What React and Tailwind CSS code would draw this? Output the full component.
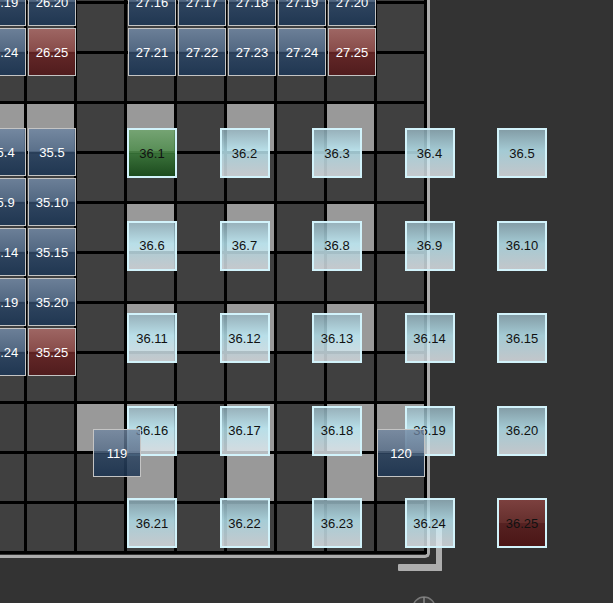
import React from "react";

// grid cells drawn as light "slot" squares (row-col)
const SLOTS = new Set([
  "3-0", "3-1", "3-3", "3-5", "3-7",
  "5-3", "5-5", "5-7",
  "7-3", "7-5", "7-7",
  "9-2", "9-3", "9-5", "9-7", "9-8",
  "10-3", "10-5", "10-7",
]);

const tones = {
  blue: "border border-[#c4c4c4] text-white bg-[linear-gradient(to_bottom,#7086a1e6_0%,#536b88e6_50%,#2e4663e6_50%,#1d3654e6_100%)]",
  red: "border border-[#c4c4c4] text-white bg-[linear-gradient(to_bottom,#a86a67e6_0%,#8f4c49e6_50%,#682525e6_50%,#52181ae6_100%)]",
  light: "border-2 border-[#d2f3fb] text-[#111] bg-[linear-gradient(to_bottom,#98b8c4cc_0%,#c0f0fccc_45%,#e6ebf0cc_100%)]",
  green: "border-2 border-[#d2f3fb] text-[#111] bg-[linear-gradient(to_bottom,#70a56ee0_0%,#4c8a4ae0_50%,#3a7a3ae0_50%,#184d1ae0_100%)]",
  wine: "border-2 border-[#d2f3fb] text-[#111] bg-[linear-gradient(to_bottom,#844240e6_0%,#6a2e2ce6_50%,#5a2020e6_50%,#4d1212e6_100%)]",
  ghost: "border border-[#c4c4c4] text-white bg-[linear-gradient(to_bottom,#7086a1cc_0%,#536b88cc_50%,#2e4663d9_50%,#1d3654d9_100%)]",
};

const block26 = ["26.19", "26.20", "26.24", "26.25"];
const block27 = [16, 17, 18, 19, 20, 21, 22, 23, 24, 25].map((n) => `27.${n}`);
const block35 = [4, 5, 9, 10, 14, 15, 19, 20, 24, 25].map((n) => `35.${n}`);
const block36 = Array.from({ length: 25 }, (_, i) => `36.${i + 1}`);

const redOnes = ["26.25", "27.25", "35.25"];

function Tile({ label, tone, className = "" }) {
  return (
    <div
      className={`flex items-center justify-center text-[13px] leading-none font-['Liberation_Sans',Arial,sans-serif] ${tones[tone]} ${className}`}
    >
      {label}
    </div>
  );
}

export default function App() {
  const cells = [];
  for (let r = 0; r < 12; r++) {
    for (let c = 0; c < 9; c++) {
      cells.push(
        <div key={`${r}-${c}`} className={SLOTS.has(`${r}-${c}`) ? "bg-[#999999]" : "bg-[#404040]"} />
      );
    }
  }

  return (
    <div className="relative w-[613px] h-[603px] overflow-hidden bg-[#333333]">
      {/* frame around the board */}
      <div className="absolute left-[-30px] top-[-60px] w-[460px] h-[618px] border-r-[3px] border-b-[3px] border-[#ababab] rounded-br-[5px]" />

      {/* board grid */}
      <div className="absolute left-[-26px] top-[-49px] w-[453px] h-[603px] bg-black p-[3px] grid grid-cols-[repeat(9,47px)] grid-rows-[repeat(12,47px)] gap-[3px]">
        {cells}
      </div>

      {/* resize grip */}
      <div className="absolute left-[436px] top-[527px] w-[6px] h-[44px] bg-[#adadad] rounded-[1px]" />
      <div className="absolute left-[398px] top-[564px] w-[44px] h-[7px] bg-[#adadad] rounded-[1px]" />

      {/* knob at bottom */}
      <svg className="absolute left-[410px] top-[594px]" width="28" height="20" viewBox="0 0 28 20">
        <circle cx="14" cy="14" r="11" fill="#3c3c3c" stroke="#7a7a7a" strokeWidth="1.5" />
        <line x1="14" y1="3" x2="14" y2="20" stroke="#8a8a8a" strokeWidth="1.5" />
      </svg>

      {/* placed groups */}
      <div className="absolute left-[-22px] top-[-22px] grid grid-cols-[repeat(2,48px)] auto-rows-[48px] gap-[2px]">
        {block26.map((l) => (
          <Tile key={l} label={l} tone={redOnes.includes(l) ? "red" : "blue"} />
        ))}
      </div>

      <div className="absolute left-[128px] top-[-22px] grid grid-cols-[repeat(5,48px)] auto-rows-[48px] gap-[2px]">
        {block27.map((l) => (
          <Tile key={l} label={l} tone={redOnes.includes(l) ? "red" : "blue"} />
        ))}
      </div>

      <div className="absolute left-[-22px] top-[128px] grid grid-cols-[repeat(2,48px)] auto-rows-[48px] gap-[2px]">
        {block35.map((l) => (
          <Tile key={l} label={l} tone={redOnes.includes(l) ? "red" : "blue"} />
        ))}
      </div>

      <div className="absolute left-[127px] top-[128px] grid grid-cols-[repeat(5,50px)] auto-rows-[50px] gap-x-[42.5px] gap-y-[42.5px]">
        {block36.map((l) => (
          <Tile key={l} label={l} tone={l === "36.1" ? "green" : l === "36.25" ? "wine" : "light"} />
        ))}
      </div>

      {/* loose tiles being dragged over the board */}
      <Tile label="119" tone="ghost" className="absolute left-[93px] top-[429px] w-[48px] h-[48px]" />
      <Tile label="120" tone="ghost" className="absolute left-[377px] top-[429px] w-[48px] h-[48px]" />
    </div>
  );
}
